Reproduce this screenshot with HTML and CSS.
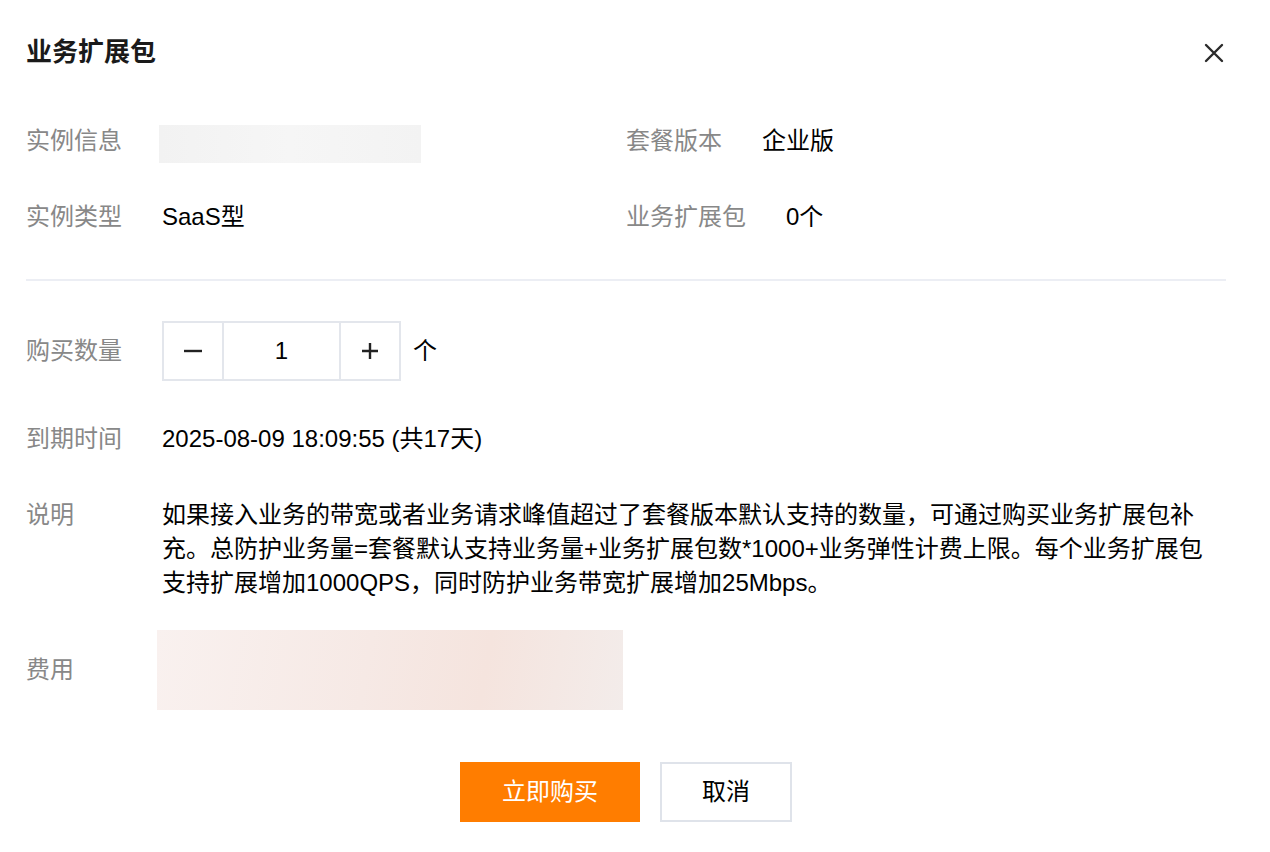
FILE: index.html
```html
<!DOCTYPE html>
<html lang="zh-CN">
<head>
    <meta charset="UTF-8">
    <meta name="viewport" content="width=device-width, initial-scale=1.0">
    <title>业务扩展包</title>
    <link rel="stylesheet" href="styles.css">
</head>
<body>
    <div class="dialog">
        <div class="head">
            <h3 class="title">业务扩展包</h3>
            <button class="close" aria-label="关闭">
                <svg width="20" height="20" viewBox="0 0 20 20"><path d="M2 2L18 18M18 2L2 18" stroke="#2b2b2b" stroke-width="2.4" stroke-linecap="round"/></svg>
            </button>
        </div>

        <div class="info">
            <div class="info-col">
                <div class="info-row">
                    <span class="label">实例信息</span>
                    <span class="blur blurGray"></span>
                </div>
                <div class="info-row">
                    <span class="label">实例类型</span>
                    <span class="value">SaaS型</span>
                </div>
            </div>
            <div class="info-col">
                <div class="info-row">
                    <span class="label">套餐版本</span>
                    <span class="value">企业版</span>
                </div>
                <div class="info-row">
                    <span class="label">业务扩展包</span>
                    <span class="value">0个</span>
                </div>
            </div>
        </div>

        <div class="divider"></div>

        <div class="form">
            <div class="form-row rowCount">
                <span class="form-label">购买数量</span>
                <div class="stepper">
                    <button class="step" aria-label="减少">
                        <svg width="20" height="20" viewBox="0 0 20 20"><path d="M1 10H19" stroke="#222" stroke-width="2.4"/></svg>
                    </button>
                    <input class="step-input" value="1">
                    <button class="step" aria-label="增加">
                        <svg width="20" height="20" viewBox="0 0 20 20"><path d="M2 10H18M10 2V18" stroke="#222" stroke-width="2.4"/></svg>
                    </button>
                </div>
                <span class="unit">个</span>
            </div>
            <div class="form-row rowExpire">
                <span class="form-label">到期时间</span>
                <span class="value">2025-08-09 18:09:55 (共17天)</span>
            </div>
            <div class="form-row rowDesc">
                <span class="form-label">说明</span>
                <p class="desc">如果接入业务的带宽或者业务请求峰值超过了套餐版本默认支持的数量，可通过购买业务扩展包补充。总防护业务量=套餐默认支持业务量+业务扩展包数*1000+业务弹性计费上限。每个业务扩展包支持扩展增加1000QPS，同时防护业务带宽扩展增加25Mbps。</p>
            </div>
            <div class="form-row rowFee">
                <span class="form-label">费用</span>
                <span class="blur blurPink"></span>
            </div>
        </div>

        <div class="footer">
            <button class="btn btnPrimary">立即购买</button>
            <button class="btn btnWeak">取消</button>
        </div>
    </div>
</body>
</html>
```

FILE: styles.css
```css
body {
    margin: 0;
    background: #fff;
    font-family: "Liberation Sans", "Noto Sans CJK SC", sans-serif;
    font-size: 24px;
    color: #000;
}
.dialog {
    width: 1200px;
    padding: 0 44px 0 26px;
}
.head {
    display: flex;
    justify-content: space-between;
    align-items: center;
    padding-top: 34px;
}
.title {
    margin: 0;
    font-size: 26px;
    line-height: 36px;
    font-weight: bold;
    color: #1a1a1a;
}
.close {
    border: none;
    background: none;
    padding: 0;
    margin-right: 2px;
    margin-top: 2px;
    width: 20px;
    height: 20px;
    cursor: pointer;
}
.info {
    display: flex;
    margin-top: 51px;
}
.info-col {
    width: 601px;
    display: flex;
    flex-direction: column;
    gap: 38px;
}
.info-row {
    display: flex;
    align-items: center;
    height: 38px;
}
.info-row .label,
.info-row .value {
    padding-bottom: 4px;
}
.label {
    color: #888;
    margin-right: 40px;
}
.value {
    color: #000;
}
.blur {
    display: inline-block;
}
.blurGray {
    width: 262px;
    height: 38px;
    margin-left: -3px;
    margin-top: 8px;
    background: linear-gradient(90deg, #f2f2f2, #f6f6f6 50%, #f3f3f3);
}
.blurPink {
    width: 466px;
    height: 80px;
    margin-left: -5px;
    background: linear-gradient(100deg, #f9f1ef, #f6e9e5 45%, #f5e4de 70%, #f3ecea);
}
.divider {
    height: 2px;
    background: #eceef4;
    margin-top: 44px;
}
.form-row {
    display: flex;
    align-items: center;
}
.form-label {
    width: 136px;
    flex-shrink: 0;
    color: #888;
}
.rowCount { margin-top: 40px; }
.rowCount .form-label,
.rowFee .form-label,
.unit {
    padding-bottom: 5px;
}
.rowExpire { margin-top: 41px; line-height: 34px; }
.rowDesc { margin-top: 42px; align-items: flex-start; line-height: 34px; }
.rowFee { margin-top: 30px; }
.stepper {
    display: flex;
    border: 2px solid #e3e6ec;
    height: 56px;
}
.step {
    width: 58px;
    border: none;
    background: #fff;
    padding: 0;
    display: flex;
    align-items: center;
    justify-content: center;
}
.step-input {
    width: 115px;
    border: none;
    border-left: 2px solid #e3e6ec;
    border-right: 2px solid #e3e6ec;
    text-align: center;
    font-family: inherit;
    font-size: 24px;
    color: #000;
    padding: 0;
    outline: none;
}
.unit {
    margin-left: 12px;
}
.desc {
    margin: 0;
    width: 1048px;
    color: #000;
}
.footer {
    display: flex;
    justify-content: center;
    gap: 20px;
    margin-top: 52px;
}
.btn {
    height: 60px;
    font-family: inherit;
    font-size: 24px;
    padding: 0 0 6px;
    cursor: pointer;
}
.btnPrimary {
    width: 180px;
    border: none;
    background: #ff7d00;
    color: #fff;
}
.btnWeak {
    width: 132px;
    border: 2px solid #dfe3ea;
    background: #fff;
    color: #000;
}
```
